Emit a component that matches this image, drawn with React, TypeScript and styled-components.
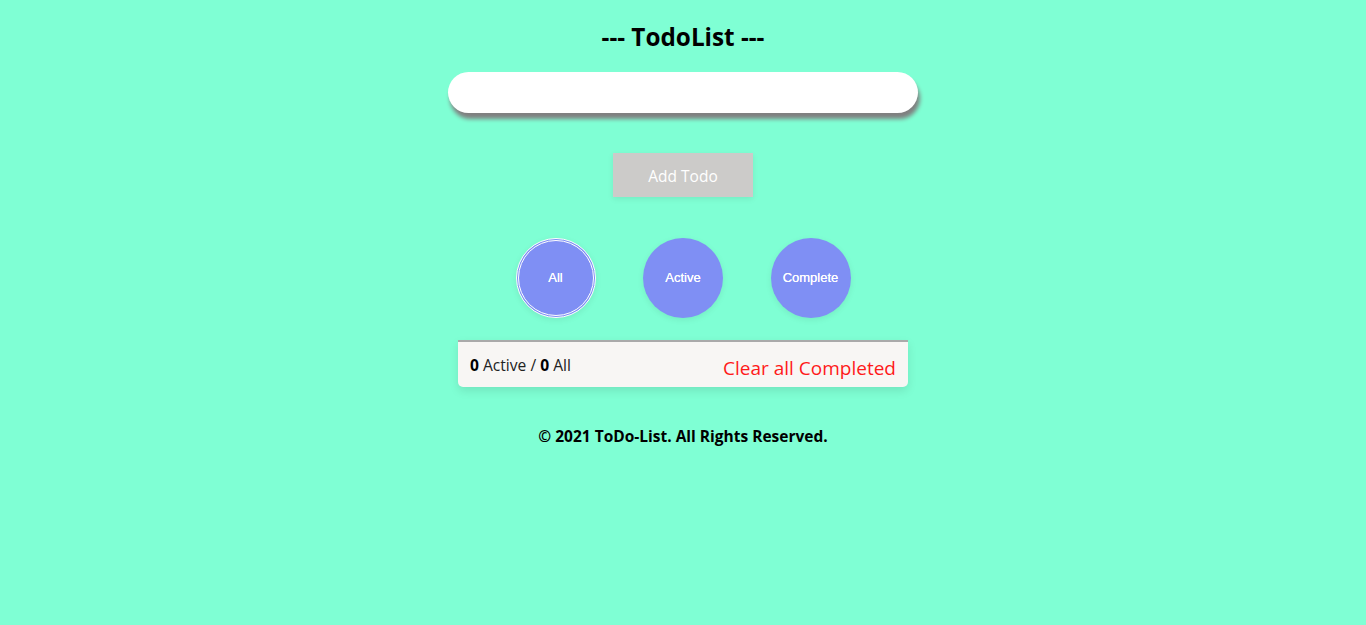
import React from "react";
import styled, { createGlobalStyle } from "styled-components";

const Global = createGlobalStyle`
  html, body { margin: 0; padding: 0; background: #7fffd4; }
  body { font-family: "Open Sans", "Noto Sans", sans-serif; }
`;

const Page = styled.div`
  display: flex;
  flex-direction: column;
  align-items: center;
  padding-top: 21px;
`;

const Title = styled.h1`
  margin: 0;
  font-size: 24.3px;
  font-weight: 700;
  line-height: 32px;
  color: #000;
`;

const Input = styled.input`
  margin-top: 19px;
  width: 470px;
  height: 41px;
  box-sizing: border-box;
  border: none;
  border-radius: 21px;
  background: #fff;
  box-shadow: 2px 6px 4px #808080;
  outline: none;
  padding: 0 20px;
  font-size: 16px;
`;

const AddButton = styled.button`
  margin-top: 40px;
  width: 140px;
  height: 44px;
  border: none;
  background: #cccbc9;
  color: #fff;
  font-family: "Open Sans", sans-serif;
  font-size: 15.5px;
  padding: 2px 0 0;
  box-shadow: 0 2px 6px rgba(0, 0, 0, 0.08);
`;

const Filters = styled.div`
  margin-top: 41px;
  display: flex;
  gap: 47.5px;
`;

const Circle = styled.button<{ $active?: boolean }>`
  width: 80px;
  height: 80px;
  border-radius: 50%;
  background: #7f8ff4;
  color: #fff;
  font-family: "Liberation Sans", Arial, sans-serif;
  font-size: 13px;
  border: ${(p) => (p.$active ? "3px double #fff" : "none")};
  box-shadow: 0 2px 6px rgba(0, 0, 0, 0.08);
  padding: 0 0 2px;
  display: flex;
  align-items: center;
  justify-content: center;
  text-shadow: 0 0 0.4px #fff;
`;

const Footer = styled.div`
  margin-top: 22px;
  width: 450px;
  height: 47px;
  box-sizing: border-box;
  background: #f8f6f4;
  border-top: 2px solid #aaa;
  border-radius: 0 0 5px 5px;
  box-shadow: 0 4px 10px rgba(0, 0, 0, 0.1);
  display: flex;
  justify-content: space-between;
  align-items: center;
  padding: 0 12px;
`;

const Count = styled.span`
  font-size: 15.6px;
  color: #222;
  margin-top: 0;
  b { color: #000; }
`;

const Clear = styled.span`
  font-size: 19px;
  color: #ff1a1a;
  margin-top: 7px;
`;

const Copy = styled.p`
  margin: 38px 0 0;
  font-size: 15.5px;
  font-weight: 700;
  color: #000;
`;

export default function App() {
  return (
    <>
      <Global />
      <Page>
        <Title>--- TodoList ---</Title>
        <Input />
        <AddButton>Add Todo</AddButton>
        <Filters>
          <Circle $active>All</Circle>
          <Circle>Active</Circle>
          <Circle>Complete</Circle>
        </Filters>
        <Footer>
          <Count>
            <b>0</b> Active / <b>0</b> All
          </Count>
          <Clear>Clear all Completed</Clear>
        </Footer>
        <Copy>© 2021 ToDo-List. All Rights Reserved.</Copy>
      </Page>
    </>
  );
}
